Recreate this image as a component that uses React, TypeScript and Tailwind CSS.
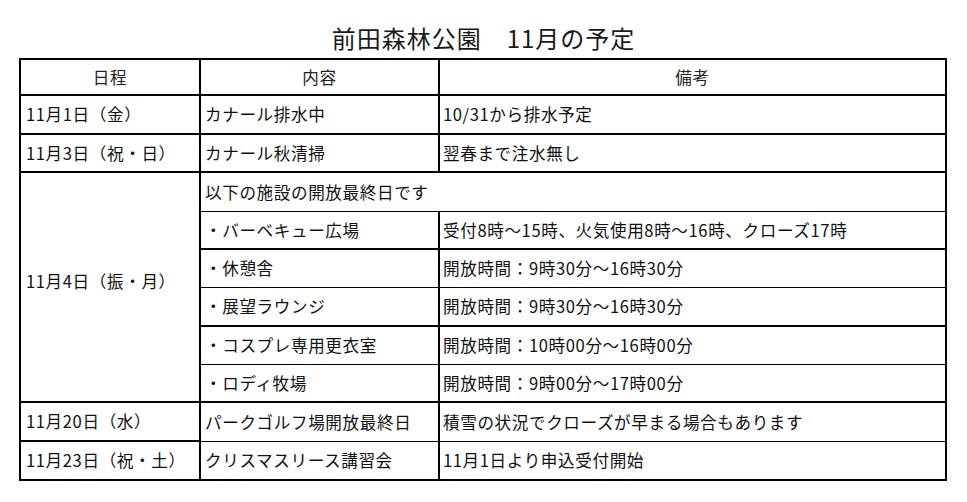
import React from 'react'

const font = { fontFamily: '"Noto Sans CJK JP", "Noto Sans", sans-serif' }

type Row = { date?: string; span?: number; content: string; note?: string; thin?: boolean; wide?: boolean; h: string }

const rows: Row[] = [
  { date: '11月1日（金）', content: 'カナール排水中', note: '10/31から排水予定', h: 'h-[39px]' },
  { date: '11月3日（祝・日）', content: 'カナール秋清掃', note: '翌春まで注水無し', h: 'h-[38px]' },
  { date: '11月4日（振・月）', span: 6, content: '以下の施設の開放最終日です', wide: true, thin: true, h: 'h-[39px]' },
  { content: '・バーベキュー広場', note: '受付8時～15時、火気使用8時～16時、クローズ17時', h: 'h-[38px]' },
  { content: '・休憩舎', note: '開放時間：9時30分～16時30分', thin: true, h: 'h-[38px]' },
  { content: '・展望ラウンジ', note: '開放時間：9時30分～16時30分', h: 'h-[39px]' },
  { content: '・コスプレ専用更衣室', note: '開放時間：10時00分～16時00分', thin: true, h: 'h-[38px]' },
  { content: '・ロディ牧場', note: '開放時間：9時00分～17時00分', h: 'h-[38px]' },
  { date: '11月20日（水）', content: 'パークゴルフ場開放最終日', note: '積雪の状況でクローズが早まる場合もあります', thin: true, h: 'h-[39px]' },
  { date: '11月23日（祝・土）', content: 'クリスマスリース講習会', note: '11月1日より申込受付開始', h: 'h-[39px]' },
]

export default function App() {
  return (
    <div className="w-[967px] h-[502px] bg-white text-[#111] overflow-hidden" style={font}>
      <h1 className="pt-[24px] h-[58px] text-center text-[24px] leading-[28px] tracking-[1px] text-[#1a1a1a]">
        前田森林公園　11月の予定
      </h1>
      <table className="ml-[19px] w-[926px] border-separate border-spacing-0 border-l-2 border-t-2 border-black text-[16.6px] tracking-[0.6px] table-fixed">
        <colgroup>
          <col className="w-[180px]" />
          <col className="w-[239px]" />
          <col className="w-[507px]" />
        </colgroup>
        <thead>
          <tr className="h-[36px]">
            {['日程', '内容', '備考'].map((t) => (
              <th key={t} className="font-normal text-center border-r-2 border-b-2 border-black p-0 text-[#222]">
                {t}
              </th>
            ))}
          </tr>
        </thead>
        <tbody>
          {rows.map((r, i) => {
            const b = r.thin ? 'border-b' : 'border-b-2'
            return (
              <tr key={i} className={r.h}>
                {r.date && (
                  <td
                    rowSpan={r.span}
                    className={`border-r-2 border-b-2 border-black pl-[5px] whitespace-nowrap align-middle ${r.span ? 'pb-[12px]' : ''}`}
                  >
                    {r.date}
                  </td>
                )}
                <td colSpan={r.wide ? 2 : 1} className={`${b} border-r-2 border-black pl-[4px] whitespace-nowrap`}>
                  {r.content}
                </td>
                {!r.wide && (
                  <td className={`${b} border-r-2 border-black pl-[3px] whitespace-nowrap`}>{r.note}</td>
                )}
              </tr>
            )
          })}
        </tbody>
      </table>
    </div>
  )
}
